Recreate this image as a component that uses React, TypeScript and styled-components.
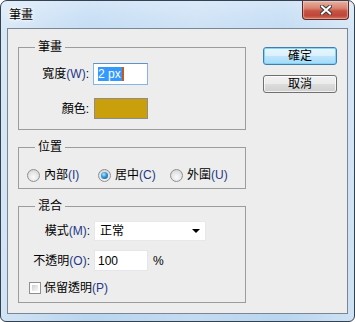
import { createGlobalStyle, styled } from "styled-components";

const GlobalStyle = createGlobalStyle`
  html, body {
    margin: 0;
    padding: 0;
  }
  body {
    width: 355px;
    height: 322px;
    overflow: hidden;
    background: #ffffff;
    font-family: "Liberation Sans", "Noto Sans CJK TC", sans-serif;
    font-size: 12px;
    color: #000000;
  }
`;

const App = () => {
  return (
    <>
      <GlobalStyle />
      <Window>
        <TitleBar>
          <Title>筆畫</Title>
          <CloseButton>
            <svg width="12" height="10" viewBox="0 0 12 10">
              <path d="M2 1.5 L10 8.5 M10 1.5 L2 8.5" stroke="#3b3b3b" strokeWidth="4" strokeLinecap="square" />
              <path d="M2 1.5 L10 8.5 M10 1.5 L2 8.5" stroke="#ffffff" strokeWidth="2" strokeLinecap="square" />
            </svg>
          </CloseButton>
        </TitleBar>
        <Client>
          <LeftCol>
            <Group $height={83}>
              <Legend>筆畫</Legend>
              <FormGrid $top={15} $gap={13}>
                <Label>寬度<Key>(W)</Key>:</Label>
                <WidthInput>
                  <Selected>2 px</Selected>
                  <Caret />
                </WidthInput>
                <Label>顏色:</Label>
                <Swatch $color="#c9a00b" />
              </FormGrid>
            </Group>

            <Group $height={42}>
              <Legend>位置</Legend>
              <RadioRow>
                <Option>
                  <Radio />
                  <span>內部<Key>(I)</Key></span>
                </Option>
                <Option>
                  <Radio $checked />
                  <span>居中<Key>(C)</Key></span>
                </Option>
                <Option>
                  <Radio />
                  <span>外圍<Key>(U)</Key></span>
                </Option>
              </RadioRow>
            </Group>

            <Group $height={97}>
              <Legend>混合</Legend>
              <FormGrid $top={14} $gap={9} $left={1}>
                <Label>模式<Key>(M)</Key>:</Label>
                <Select>
                  <span>正常</span>
                  <Arrow />
                </Select>
                <Label>不透明<Key>(O)</Key>:</Label>
                <InputRow>
                  <TextBox>100</TextBox>
                  <span>%</span>
                </InputRow>
                <CheckRow>
                  <CheckBox />
                  <span>保留透明<Key>(P)</Key></span>
                </CheckRow>
              </FormGrid>
            </Group>
          </LeftCol>

          <RightCol>
            <Button $primary>確定</Button>
            <Button>取消</Button>
          </RightCol>
        </Client>
      </Window>
    </>
  );
};

const Window = styled.div`
  box-sizing: border-box;
  width: 355px;
  height: 322px;
  border: 1px solid #34414f;
  border-radius: 7px 7px 6px 6px;
  background:
    linear-gradient(90deg, rgba(255, 255, 255, 0.35) 0%, rgba(255, 255, 255, 0) 25%, rgba(255, 255, 255, 0.15) 55%, rgba(255, 255, 255, 0) 80%, rgba(255, 255, 255, 0.3) 100%),
    linear-gradient(180deg, #d4e6f8 0%, #c4dcf3 30px, #b9d5ef 100%);
  display: flex;
  flex-direction: column;
  overflow: hidden;
`;

const TitleBar = styled.div`
  height: 27px;
  display: flex;
  justify-content: space-between;
  align-items: flex-start;
  flex-shrink: 0;
`;

const Title = styled.div`
  padding: 7px 0 0 8px;
  line-height: 14px;
  font-size: 12px;
  text-shadow: 0 0 6px #ffffff, 0 0 3px #ffffff, 0 0 2px #ffffff;
`;

const CloseButton = styled.div`
  box-sizing: border-box;
  width: 47px;
  height: 19px;
  margin-right: 5px;
  border: 1px solid #5e2a24;
  border-top: none;
  border-radius: 0 0 4px 4px;
  background: linear-gradient(180deg, #e9b0a3 0%, #d88470 40%, #c75344 55%, #c0473a 80%, #cf6a58 100%);
  box-shadow: inset 0 0 1px 1px rgba(255, 220, 210, 0.5);
  display: flex;
  align-items: center;
  justify-content: center;
`;

const Client = styled.div`
  flex: 1;
  margin: 0 6px 7px 6px;
  border: 1px solid #7b8694;
  background: #ededed;
  display: flex;
  align-items: flex-start;
  gap: 17px;
  padding: 18px 0 0 10px;
`;

const LeftCol = styled.div`
  width: 228px;
  display: flex;
  flex-direction: column;
  gap: 17px;
`;

const RightCol = styled.div`
  width: 74px;
  display: flex;
  flex-direction: column;
  gap: 10px;
`;

const Group = styled.div<{ $height: number }>`
  position: relative;
  box-sizing: border-box;
  height: ${({ $height }) => $height}px;
  border: 1px solid #9c9c9c;
`;

const Legend = styled.span`
  position: absolute;
  top: -8px;
  left: 16px;
  padding: 0 3px;
  background: #ededed;
  line-height: 14px;
`;

const FormGrid = styled.div<{ $top: number; $gap: number; $left?: number }>`
  display: grid;
  grid-template-columns: 70px auto;
  column-gap: 4px;
  row-gap: ${({ $gap }) => $gap}px;
  align-items: center;
  justify-items: start;
  padding: ${({ $top, $left }) => `${$top}px 0 0 ${$left ?? 0}px`};
`;

const Label = styled.span`
  justify-self: end;
  line-height: 14px;
  white-space: nowrap;
`;

const Key = styled.span`
  color: #1f3785;
`;

const WidthInput = styled.div`
  box-sizing: border-box;
  width: 55px;
  height: 22px;
  border: 1px solid #83b5e6;
  border-top-color: #5d93c9;
  background: #ffffff;
  display: flex;
  align-items: center;
  padding-left: 4px;
`;

const Selected = styled.span`
  background: #3399ff;
  color: #ffffff;
  line-height: 14px;
  padding: 0 1px 0 0;
`;

const Caret = styled.span`
  width: 2px;
  height: 14px;
  background: #c55a1c;
`;

const Swatch = styled.div<{ $color: string }>`
  box-sizing: border-box;
  width: 54px;
  height: 21px;
  margin-left: 1px;
  border: 1px solid #8c8c8c;
  background: ${({ $color }) => $color};
`;

const RadioRow = styled.div`
  display: grid;
  grid-template-columns: 71px 72px auto;
  align-items: center;
  height: 16px;
  padding: 19px 0 0 8px;
`;

const Option = styled.div`
  display: flex;
  align-items: center;
  gap: 4px;
  line-height: 14px;
  white-space: nowrap;
`;

const Radio = styled.span<{ $checked?: boolean }>`
  position: relative;
  box-sizing: border-box;
  width: 13px;
  height: 13px;
  border-radius: 50%;
  border: 1px solid #8f9090;
  background: radial-gradient(circle at 50% 65%, #fbfbfb 0%, #e4e4e4 55%, #c8c8c8 100%);
  flex-shrink: 0;

  &::after {
    content: "";
    display: ${({ $checked }) => ($checked ? "block" : "none")};
    position: absolute;
    left: 2px;
    top: 2px;
    width: 7px;
    height: 7px;
    border-radius: 50%;
    background: radial-gradient(circle at 40% 35%, #b3ecff 0%, #3a9be0 40%, #0f4c8a 100%);
  }
`;

const Select = styled.div`
  box-sizing: border-box;
  width: 112px;
  height: 20px;
  margin-left: 0;
  background: #ffffff;
  border: 1px solid #e8e8e8;
  display: flex;
  align-items: center;
  justify-content: space-between;
  padding: 0 5px 0 5px;
  line-height: 14px;
`;

const Arrow = styled.span`
  width: 0;
  height: 0;
  border-left: 4px solid transparent;
  border-right: 4px solid transparent;
  border-top: 4px solid #000000;
`;

const InputRow = styled.div`
  display: flex;
  align-items: center;
  gap: 5px;
`;

const TextBox = styled.div`
  box-sizing: border-box;
  width: 54px;
  height: 21px;
  background: #ffffff;
  border: 1px solid #e3e6ea;
  padding-left: 3px;
  display: flex;
  align-items: center;
`;

const CheckRow = styled.div`
  grid-column: 1 / span 2;
  display: flex;
  align-items: center;
  gap: 3px;
  height: 16px;
  padding-left: 9px;
  line-height: 14px;
`;

const CheckBox = styled.span`
  box-sizing: border-box;
  width: 12px;
  height: 12px;
  border: 1px solid #8f8f8f;
  background: #ffffff;
  padding: 2px;

  &::after {
    content: "";
    display: block;
    width: 100%;
    height: 100%;
    background: linear-gradient(135deg, #d0d0d0 0%, #e8e8e8 60%, #f6f6f6 100%);
  }
`;

const Button = styled.div<{ $primary?: boolean }>`
  box-sizing: border-box;
  height: 18px;
  border: 1px solid ${({ $primary }) => ($primary ? "#3c7fb1" : "#707070")};
  border-radius: 3px;
  background: ${({ $primary }) =>
    $primary
      ? "linear-gradient(180deg, #eaf6fd 0%, #d9f0fc 50%, #bee6fd 50%, #a7d9f5 100%)"
      : "linear-gradient(180deg, #f2f2f2 0%, #ebebeb 50%, #dddddd 50%, #cfcfcf 100%)"};
  box-shadow: inset 0 0 0 1px ${({ $primary }) => ($primary ? "rgba(120, 210, 250, 0.9)" : "rgba(255, 255, 255, 0.7)")};
  display: flex;
  align-items: center;
  justify-content: center;
  line-height: 14px;
`;

export default App;
